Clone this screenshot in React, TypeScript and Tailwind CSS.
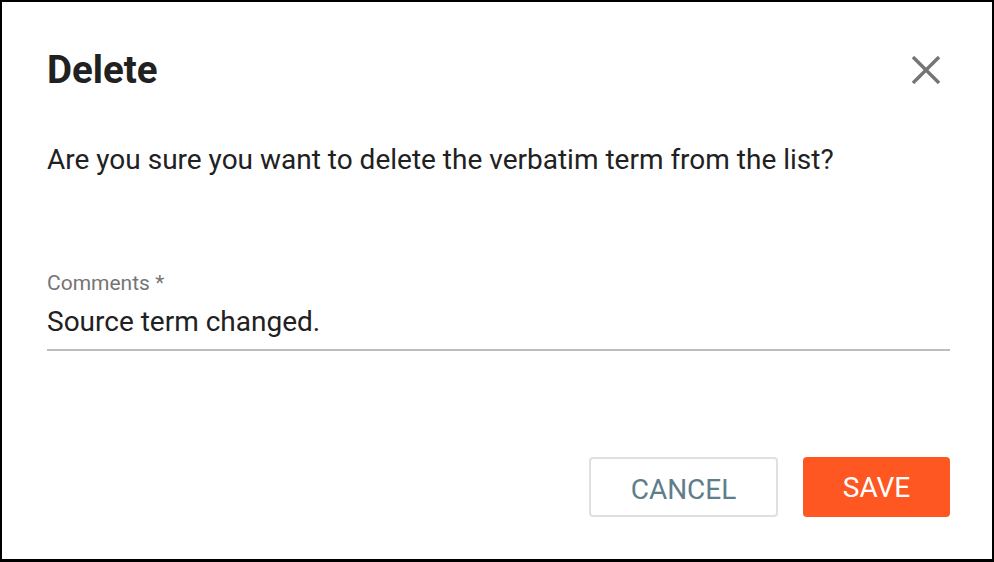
export default function App() {
  return (
    <div
      className="w-[994px] h-[562px] bg-white border-2 border-b-[3px] border-black flex flex-col pl-[45px] pr-[42px] text-[#212121]"
      style={{ fontFamily: 'Roboto, "Liberation Sans", sans-serif' }}
    >
      {/* Header */}
      <div className="flex items-center justify-between pt-[46px]">
        <h2 className="text-[38.5px] font-bold leading-[44px]">Delete</h2>
        <button className="text-[#757575] mr-[10px]">
          <svg width="28" height="28" viewBox="0 0 28 28" fill="none" stroke="currentColor" strokeWidth="3.4" strokeLinecap="butt">
            <line x1="1" y1="1" x2="27" y2="27" />
            <line x1="27" y1="1" x2="1" y2="27" />
          </svg>
        </button>
      </div>

      <p className="mt-[50px] text-[28px] leading-[36px]">
        Are you sure you want to delete the verbatim term from the list?
      </p>

      {/* Comments field */}
      <div className="mt-[91px] flex flex-col">
        <label className="text-[21px] leading-[28px] text-[#757575]">Comments *</label>
        <div className="mt-[7px] text-[28px] leading-[36px] pb-[9px] border-b-2 border-[#bdbdbd]">
          Source term changed.
        </div>
      </div>

      {/* Actions */}
      <div className="mt-auto mb-[42px] flex justify-end gap-[25px]">
        <button className="w-[189px] h-[60px] pt-[5px] rounded border-2 border-[#e0e0e0] text-[28px] text-[#607d8b] uppercase">
          Cancel
        </button>
        <button className="w-[147px] h-[60px] pt-[2px] rounded bg-[#ff5722] text-[28px] text-white uppercase">
          Save
        </button>
      </div>
    </div>
  );
}
